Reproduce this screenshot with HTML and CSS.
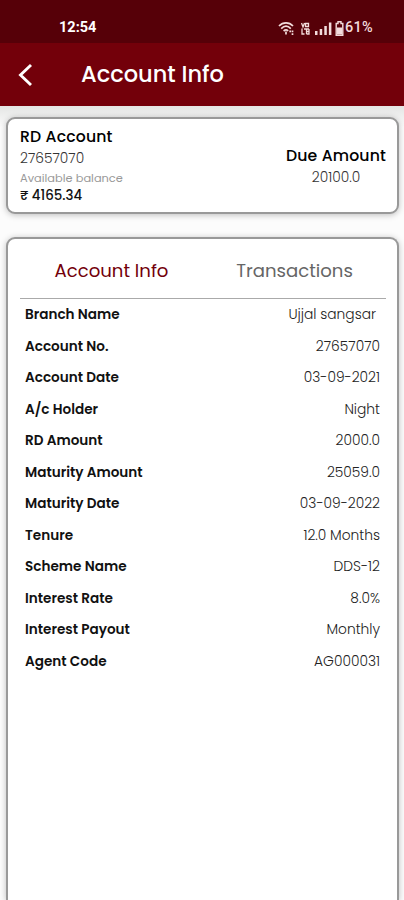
FILE: index.html
```
<!DOCTYPE html>
<html lang="en">
<head>
    <meta charset="UTF-8">
    <meta name="viewport" content="width=device-width, initial-scale=1.0">
    <title>Account Info</title>
    <link rel="stylesheet" href="styles.css">
</head>
<body>
    <div class="status-bar">
        <span class="clock">12:54</span>
        <div class="status-icons">
            <svg class="icon-wifi" width="17" height="15" viewBox="0 0 17 15" fill="none" stroke="currentColor" stroke-width="1.7">
                <path d="M1 5C5 .8 11 .8 15 5M3.2 7.600c3-3 6.600-3 9.600 0M5.600 10c1.700-1.500 3-1.500 4.600-.2"/>
                <path d="M8 10.500v3M12.200 9.500v1.700M14.500 9.500v1.700M14.500 12.200v1.700"/>
            </svg>
            <svg class="icon-volte" width="9" height="13" viewBox="0 0 9 13" fill="none" stroke="currentColor" stroke-width="1.3">
                <path d="M.5 1l1.500 4L3.500 1M4.500 1.500h3v3h-3zM1 6.500V12h2.500M3 7h5M5.500 7v5M8 7v5H5.500M5.500 9.500H8"/>
            </svg>
            <svg class="icon-signal" width="17" height="13" viewBox="0 0 17 13" fill="currentColor">
                <rect x="0" y="9" width="2.5" height="4"/>
                <rect x="4.7" y="7" width="2.5" height="6"/>
                <rect x="9.3" y="4" width="2.5" height="9"/>
                <rect x="13.9" y="0.5" width="2.5" height="12.5"/>
            </svg>
            <svg class="icon-battery" width="9" height="15" viewBox="0 0 9 15">
                <path d="M3 .8h3v1.700h1.800v11.700H1.200V2.500H3z" fill="none" stroke="currentColor" stroke-width="1.4"/>
                <rect x="2" y="6.5" width="5" height="7" fill="currentColor"/>
            </svg>
            <span class="battery-level">61%</span>
        </div>
    </div>

    <header class="app-bar">
        <svg class="back" width="16" height="24" viewBox="0 0 16 24" fill="none" stroke="currentColor" stroke-width="2.9">
            <path d="M14 2L3.500 12 14 22"/>
        </svg>
        <h1>Account Info</h1>
    </header>

    <main>
        <section class="card summary">
            <div class="account">
                <h2>RD Account</h2>
                <p class="number">27657070</p>
                <p class="caption">Available balance</p>
                <p class="balance">₹ 4165.34</p>
            </div>
            <div class="due">
                <h2>Due Amount</h2>
                <p class="number">20100.0</p>
            </div>
        </section>

        <section class="card details">
            <nav class="tabs">
                <span class="tab active">Account Info</span>
                <span class="tab">Transactions</span>
            </nav>
            <dl class="info">
                <div class="row"><dt>Branch Name</dt><dd class="branch">Ujjal sangsar</dd></div>
                <div class="row"><dt>Account No.</dt><dd>27657070</dd></div>
                <div class="row"><dt>Account Date</dt><dd>03-09-2021</dd></div>
                <div class="row"><dt>A/c Holder</dt><dd>Night</dd></div>
                <div class="row"><dt>RD Amount</dt><dd>2000.0</dd></div>
                <div class="row"><dt>Maturity Amount</dt><dd>25059.0</dd></div>
                <div class="row"><dt>Maturity Date</dt><dd>03-09-2022</dd></div>
                <div class="row"><dt>Tenure</dt><dd>12.0 Months</dd></div>
                <div class="row"><dt>Scheme Name</dt><dd>DDS-12</dd></div>
                <div class="row"><dt>Interest Rate</dt><dd>8.0%</dd></div>
                <div class="row"><dt>Interest Payout</dt><dd>Monthly</dd></div>
                <div class="row"><dt>Agent Code</dt><dd>AG000031</dd></div>
            </dl>
        </section>
    </main>
</body>
</html>
```

FILE: styles.css
```
* {
    box-sizing: border-box;
    margin: 0;
    padding: 0;
}
body {
    height: 900px;
    display: flex;
    flex-direction: column;
    overflow: hidden;
    font-family: Poppins, Inter, sans-serif;
    background: #fcfcfc;
    color: #111;
}
.status-bar {
    height: 43px;
    flex-shrink: 0;
    display: flex;
    justify-content: space-between;
    padding: 13px 31px 0 59px;
    background: #560008;
    color: #f3dcdc;
    font-family: Roboto, sans-serif;
    line-height: 30px;
}
.clock {
    font-size: 14.5px;
    font-weight: 700;
    color: #fff;
}
.status-icons {
    height: 30px;
    display: flex;
    align-items: center;
}
.icon-volte {
    margin-left: 6px;
}
.icon-signal {
    margin-left: 5px;
}
.icon-battery {
    margin: 0 1px 0 3px;
}
.battery-level {
    font-size: 14.5px;
    font-weight: 500;
    letter-spacing: 0.3px;
}
.app-bar {
    height: 63px;
    flex-shrink: 0;
    display: flex;
    align-items: center;
    padding-left: 17px;
    background: #73000a;
    color: #fff;
}
.app-bar h1 {
    margin: -2px 0 0 48px;
    font-size: 22.5px;
    font-weight: 500;
}
main {
    flex: 1;
    min-height: 0;
    display: flex;
    flex-direction: column;
    gap: 23px;
    padding: 11px 5px 0 6px;
    background: linear-gradient(#e4e5e4, #fcfcfc 22px);
}
.card {
    border: 2px solid #999;
    border-radius: 9px;
    background: #fff;
    box-shadow: 0 1px 6px rgba(0, 0, 0, 0.25);
}
.summary {
    height: 97px;
    flex-shrink: 0;
    display: flex;
    justify-content: space-between;
    padding: 7px 11px 0 12px;
}
.summary h2 {
    font-size: 15.7px;
    font-weight: 500;
    line-height: 21px;
    letter-spacing: 0.15px;
    color: #000;
}
.number {
    padding-top: 1px;
    font-size: 13.8px;
    font-weight: 300;
    line-height: 22px;
    color: #333;
}
.caption {
    font-size: 11.4px;
    line-height: 16px;
    color: #999;
}
.balance {
    font-size: 13.4px;
    font-weight: 500;
    line-height: 20px;
}
.due {
    padding-top: 19px;
    text-align: center;
}
.details {
    flex: 1;
    padding: 0 11px 0 12px;
    border-bottom: none;
    border-radius: 9px 9px 0 0;
}
.tabs {
    height: 60px;
    display: flex;
    border-bottom: 1px solid #aaa;
}
.tab {
    flex: 1;
    padding-top: 7px;
    font-size: 18.1px;
    line-height: 50px;
    text-align: center;
    color: #666;
}
.tab.active {
    color: #73000a;
}
.row {
    height: 31.5px;
    display: flex;
    justify-content: space-between;
    padding: 0 6px 0 5px;
    font-size: 13.6px;
    line-height: 31.5px;
}
.row dt {
    font-weight: 600;
}
.row dd {
    font-size: 13.8px;
    font-weight: 300;
    color: #222;
}
.row .branch {
    padding-right: 4px;
}
```
